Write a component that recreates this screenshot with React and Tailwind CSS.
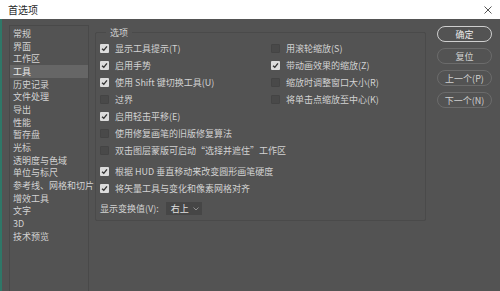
import React from 'react';

const sideItems = [
  '常规', '界面', '工作区', '工具', '历史记录', '文件处理', '导出', '性能', '暂存盘', '光标',
  '透明度与色域', '单位与标尺', '参考线、网格和切片', '增效工具', '文字', '3D', '技术预览',
];

const Check = ({ on }) => (
  <span
    className={
      'w-[9px] h-[9px] shrink-0 flex items-center justify-center rounded-[1px] ' +
      (on ? 'bg-[#dcdcdc]' : 'bg-[#494949] border border-[#444444]')
    }
  >
    {on && (
      <svg width="7" height="7" viewBox="0 0 8 8">
        <path d="M1.2 4.2 L3.2 6.1 L6.8 1.6" fill="none" stroke="#333" strokeWidth="1.6" />
      </svg>
    )}
  </span>
);

const Row = ({ on, children }) => (
  <div className="h-[17px] flex items-center gap-[6px]">
    <Check on={on} />
    <span className="whitespace-nowrap">{children}</span>
  </div>
);

const Btn = ({ primary, children }) => (
  <div
    className={
      'h-[16px] w-[55px] rounded-full flex items-center justify-center text-[9px] ' +
      (primary ? 'border-[1.5px] border-[#cfcfcf] text-[#ececec]' : 'border border-[#6b6b6b] text-[#d0d0d0]')
    }
  >
    {children}
  </div>
);

export default function App() {
  return (
    <div
      className="w-[500px] h-[291px] overflow-hidden bg-[#535353] flex flex-col text-[#d2d2d2] text-[9px] leading-none"
      style={{ fontFamily: '"Noto Sans CJK SC", "Noto Sans", sans-serif' }}
    >
      <div className="h-[19px] bg-white flex items-center justify-between pl-[8px] pr-[8px] shrink-0">
        <span className="text-[10px] text-[#2a2a2a]">首选项</span>
        <svg width="8" height="8" viewBox="0 0 8 8">
          <path d="M0.5 0.5 L7.5 7.5 M7.5 0.5 L0.5 7.5" stroke="#555" strokeWidth="1" />
        </svg>
      </div>
      <div className="flex flex-1 min-h-0">
        <div className="w-[2px] bg-[#2f7868] shrink-0" />
        {/* sidebar */}
        <div className="ml-[7px] mt-[6px] w-[80px] shrink-0 border-l border-r border-t border-[#494949] pt-[1px]">
          {sideItems.map((s) => (
            <div
              key={s}
              className={'h-[12.7px] flex items-center pl-[3px] whitespace-nowrap ' + (s === '工具' ? 'bg-[#666666] text-[#e6e6e6]' : '')}
            >
              {s}
            </div>
          ))}
        </div>
        {/* options group */}
        <fieldset className="ml-[6px] mt-[9px] w-[331px] h-[193px] shrink-0 border border-[#4a4a4a] rounded-[2px] pl-[4px] pr-0 pt-0 pb-0 m-0">
          <legend className="ml-[6px] px-[4px] text-[9px] text-[#d2d2d2]">选项</legend>
          <div className="flex pt-[3px]">
            <div className="w-[171px]">
              <Row on>显示工具提示(T)</Row>
              <Row on>启用手势</Row>
              <Row on>使用 Shift 键切换工具(U)</Row>
              <Row>过界</Row>
              <Row on>启用轻击平移(E)</Row>
            </div>
            <div>
              <Row>用滚轮缩放(S)</Row>
              <Row on>带动画效果的缩放(Z)</Row>
              <Row>缩放时调整窗口大小(R)</Row>
              <Row>将单击点缩放至中心(K)</Row>
            </div>
          </div>
          <Row>使用修复画笔的旧版修复算法</Row>
          <Row>双击图层蒙版可启动“选择并遮住”工作区</Row>
          <div className="h-[4px]" />
          <Row on>根据 HUD 垂直移动来改变圆形画笔硬度</Row>
          <Row on>将矢量工具与变化和像素网格对齐</Row>
          <div className="flex items-center mt-[5px] h-[13px]">
            <span className="whitespace-nowrap">显示变换值(V):</span>
            <div className="ml-[7px] w-[36px] h-[13px] bg-[#464646] flex items-center justify-between pl-[5px] pr-[3px] text-[#e0e0e0]">
              <span>右上</span>
              <svg width="6" height="4" viewBox="0 0 6 4">
                <path d="M0.5 0.5 L3 3 L5.5 0.5" fill="none" stroke="#9a9a9a" strokeWidth="0.9" />
              </svg>
            </div>
          </div>
        </fieldset>
        {/* buttons */}
        <div className="ml-[11px] mt-[7px] flex flex-col gap-[6px]">
          <Btn primary>确定</Btn>
          <Btn>复位</Btn>
          <Btn>上一个(P)</Btn>
          <Btn>下一个(N)</Btn>
        </div>
      </div>
    </div>
  );
}
